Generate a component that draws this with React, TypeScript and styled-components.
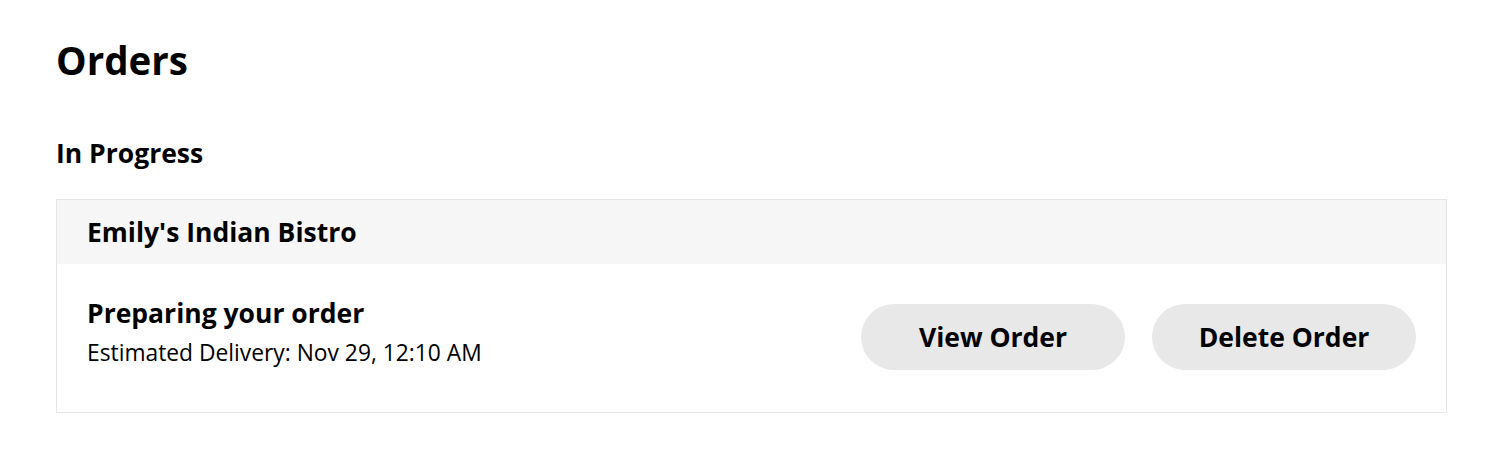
import React from "react";
import styled, { createGlobalStyle } from "styled-components";

const GlobalStyle = createGlobalStyle`
  body {
    margin: 0;
    background: #fff;
    color: #000;
    font-family: "Open Sans", "Noto Sans", sans-serif;
  }
`;

const Page = styled.main`
  padding: 34px 44px 30px 56px;
`;

const Title = styled.h1`
  margin: 0 0 49px;
  font-size: 38.5px;
  font-weight: 700;
  line-height: 52px;
`;

const SectionTitle = styled.h2`
  margin: 0 0 28px;
  font-size: 26.5px;
  font-weight: 700;
  line-height: 36px;
`;

const Card = styled.section`
  border: 1px solid #e6e6e6;
`;

const CardHeader = styled.div`
  background: #f6f6f6;
  padding: 0 30px;
  height: 64px;
  display: flex;
  align-items: center;
  font-size: 26.5px;
  font-weight: 700;
`;

const CardBody = styled.div`
  display: flex;
  align-items: flex-start;
  justify-content: space-between;
  padding: 31px 30px 42px 30px;
`;

const Status = styled.div`
  display: flex;
  flex-direction: column;
`;

const StatusTitle = styled.span`
  font-size: 26.5px;
  font-weight: 700;
  line-height: 36px;
`;

const StatusMeta = styled.span`
  margin-top: 6px;
  font-size: 22.8px;
  line-height: 31px;
`;

const Actions = styled.div`
  display: flex;
  gap: 27px;
  margin-top: 9px;
`;

const PillButton = styled.button`
  width: 264px;
  height: 66px;
  padding: 0;
  border: none;
  border-radius: 33px;
  background: #e8e8e8;
  color: #000;
  font-family: inherit;
  font-size: 26.5px;
  font-weight: 700;
  cursor: pointer;
`;

export default function App() {
  return (
    <>
      <GlobalStyle />
      <Page>
        <Title>Orders</Title>
        <SectionTitle>In Progress</SectionTitle>
        <Card>
          <CardHeader>Emily's Indian Bistro</CardHeader>
          <CardBody>
            <Status>
              <StatusTitle>Preparing your order</StatusTitle>
              <StatusMeta>Estimated Delivery: Nov 29, 12:10 AM</StatusMeta>
            </Status>
            <Actions>
              <PillButton>View Order</PillButton>
              <PillButton>Delete Order</PillButton>
            </Actions>
          </CardBody>
        </Card>
      </Page>
    </>
  );
}
